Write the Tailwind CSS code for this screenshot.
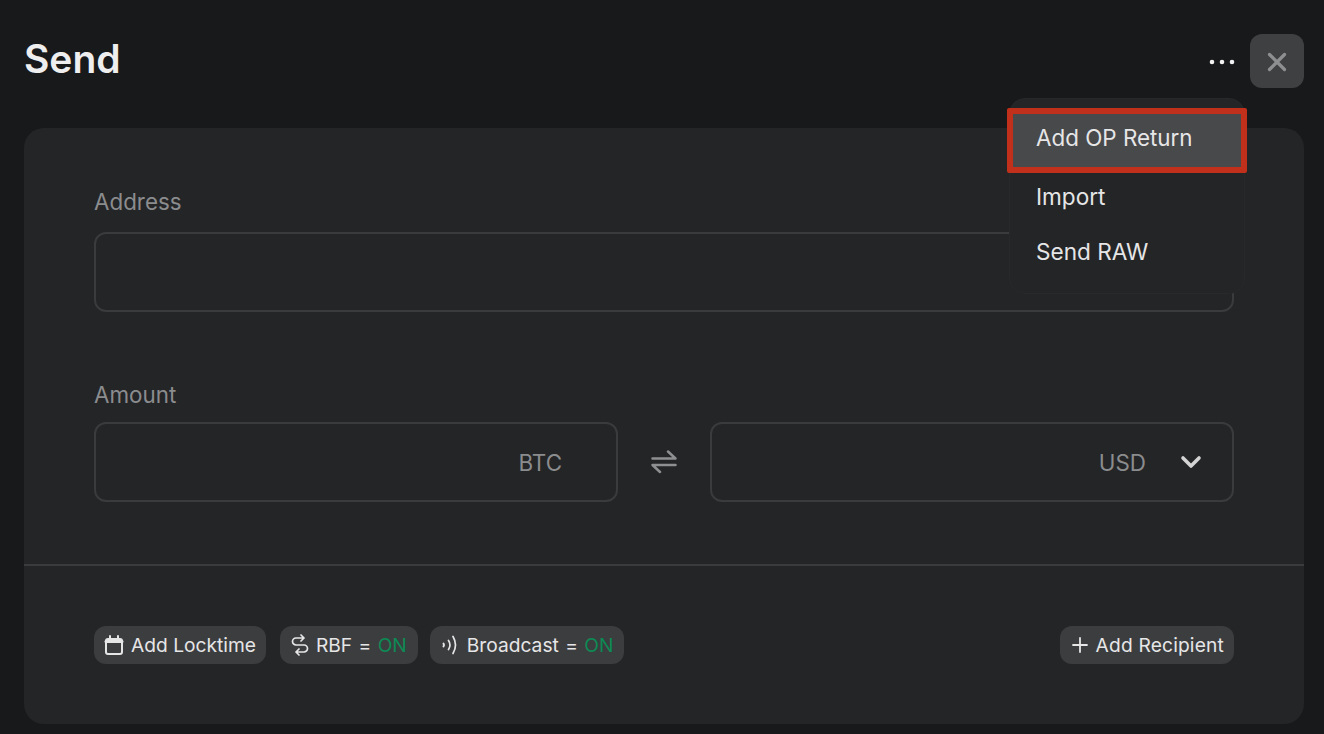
<!doctype html>
<html lang="en">
<head>
<meta charset="utf-8">
<script src="https://cdn.jsdelivr.net/npm/@tailwindcss/browser@4"></script>
</head>
<body class="m-0 bg-[#18191b]">
<div class="relative w-[1324px] h-[734px] overflow-hidden pl-6 pr-5 font-['Inter',sans-serif] text-[#e8e8e9]">
  <header class="h-[128px] flex items-start justify-between">
    <h1 class="mt-[34px] h-[50px] leading-[50px] text-[39px] font-semibold text-[#eeeeef]">Send</h1>
    <div class="mt-[34px] flex items-center gap-[15px]">
      <svg class="mt-[2px]" width="26" height="6" viewBox="0 0 26 6" fill="#f2f2f3"><circle cx="3" cy="3" r="2.3"/><circle cx="13" cy="3" r="2.3"/><circle cx="23" cy="3" r="2.3"/></svg>
      <button class="w-[54px] h-[54px] rounded-[12px] bg-[#3f4042] flex items-center justify-center">
        <svg class="mt-[2px]" width="20" height="20" viewBox="0 0 20 20" fill="none" stroke="#8e8f91" stroke-width="3.2" stroke-linecap="round"><path d="M2.500 2.500l15 15M17.500 2.500l-15 15"/></svg>
      </button>
    </div>
  </header>

  <main class="w-[1280px] h-[596px] rounded-[20px] bg-[#242527] flex flex-col">
    <section class="h-[438px] border-b-2 border-[#3a3b3d] px-[70px] pt-[60px]">
      <label class="block h-[28px] leading-[28px] text-[22.4px] text-[#8b8c8e]">Address</label>
      <div class="mt-[16px] h-[80px] rounded-[12px] border-2 border-[#3a3b3d]"></div>
      <label class="block mt-[69px] h-[28px] leading-[28px] text-[22.4px] text-[#8b8c8e]">Amount</label>
      <div class="mt-[13px] flex items-center">
        <div class="w-[524px] h-[80px] rounded-[12px] border-2 border-[#3a3b3d] flex items-center justify-end pr-[54px] pt-[2px] text-[22.4px] text-[#8b8c8e]">BTC</div>
        <div class="w-[92px] flex justify-center">
          <svg width="26" height="24" viewBox="0 0 26 24" fill="none" stroke="#8e8f91" stroke-width="2.500" stroke-linecap="round" stroke-linejoin="round"><path d="M1.500 8.500h23L17 1.500M24.500 15h-23l7.500 7"/></svg>
        </div>
        <div class="w-[524px] h-[80px] rounded-[12px] border-2 border-[#3a3b3d] flex items-center justify-end pr-[30px] text-[22.4px] text-[#8b8c8e]">
          <span class="pt-[2px]">USD</span>
          <svg class="ml-[34px]" width="22" height="14" viewBox="0 0 22 14" fill="none" stroke="#d4d4d5" stroke-width="3.600" stroke-linecap="round" stroke-linejoin="round"><path d="M3 3l8 8 8-8"/></svg>
        </div>
      </div>
    </section>
    <footer class="flex-1 px-[70px] pt-[60px] flex items-start justify-between text-[19.2px] text-[#e6e6e7]">
      <div class="flex">
        <button class="h-[38px] px-[10px] rounded-[12px] bg-[#3c3d3f] flex items-center gap-[7px]">
          <svg width="20" height="20" viewBox="0 0 20 20" fill="none" stroke="#e6e6e7" stroke-width="2" stroke-linecap="round"><rect x="2" y="4" width="16" height="15" rx="2"/><path d="M2 6.500h16" stroke-width="3"/><path d="M6 1v3M14 1v3"/></svg>
          <span>Add Locktime</span>
        </button>
        <button class="ml-[14px] h-[38px] pl-[10px] pr-[11px] rounded-[12px] bg-[#3c3d3f] flex items-center gap-[6px]">
          <svg width="20" height="22" viewBox="0 0 20 22" fill="none" stroke="#e6e6e7" stroke-width="1.700" stroke-linecap="round" stroke-linejoin="round"><path d="M11 1l3 3-3 3M14 4H6a3.500 3.500 0 0 0-3.500 3.500M9 21l-3-3 3-3M6 18h8a3.500 3.500 0 0 0 0-7H6a3.500 3.500 0 0 1-3.500-3.500"/></svg>
          <span>RBF <span class="ml-[1px]">=</span> <span class="ml-[1px] text-[#0d8a55]">ON</span></span>
        </button>
        <button class="ml-3 h-[38px] pl-[12px] pr-[11px] rounded-[12px] bg-[#3c3d3f] flex items-center gap-[10px]">
          <svg width="15" height="20" viewBox="0 0 15 20" fill="none" stroke="#e6e6e7" stroke-width="1.700" stroke-linecap="round"><path d="M6.500 5.500Q9.500 10 6.500 14.500M11 1.500Q16 10 11 18.500"/><path d="M1.500 8.500Q2.500 10 1.500 11.500" stroke-width="2"/></svg>
          <span>Broadcast <span class="ml-[1px]">=</span> <span class="ml-[1px] text-[#0d8a55]">ON</span></span>
        </button>
      </div>
      <button class="h-[38px] pl-[12px] pr-[10px] rounded-[12px] bg-[#3c3d3f] flex items-center gap-[8px]">
        <svg width="16" height="16" viewBox="0 0 16 16" fill="none" stroke="#e6e6e7" stroke-width="1.800" stroke-linecap="round"><path d="M8 1v14M1 8h14"/></svg>
        <span class="tracking-[0.17px]">Add Recipient</span>
      </button>
    </footer>
  </main>

  <nav class="absolute left-[1009px] top-[98px] w-[236px] h-[196px] rounded-[16px] bg-[#242527] border border-[#28292b] pt-[9px] text-[22.6px] text-[#e6e6e7]">
    <div class="-mx-[3px] h-[65px] border-[6px] border-[#c1301a] rounded-[2px] bg-[#48494b] flex items-center pb-[5px] pl-[23px] text-[22.4px]">Add OP Return</div>
    <div class="h-[57px] mt-[-5px] flex items-center pl-[26px]">Import</div>
    <div class="h-[56px] mt-[-1px] flex items-center pl-[26px]">Send RAW</div>
  </nav>
</div>
</body>
</html>
